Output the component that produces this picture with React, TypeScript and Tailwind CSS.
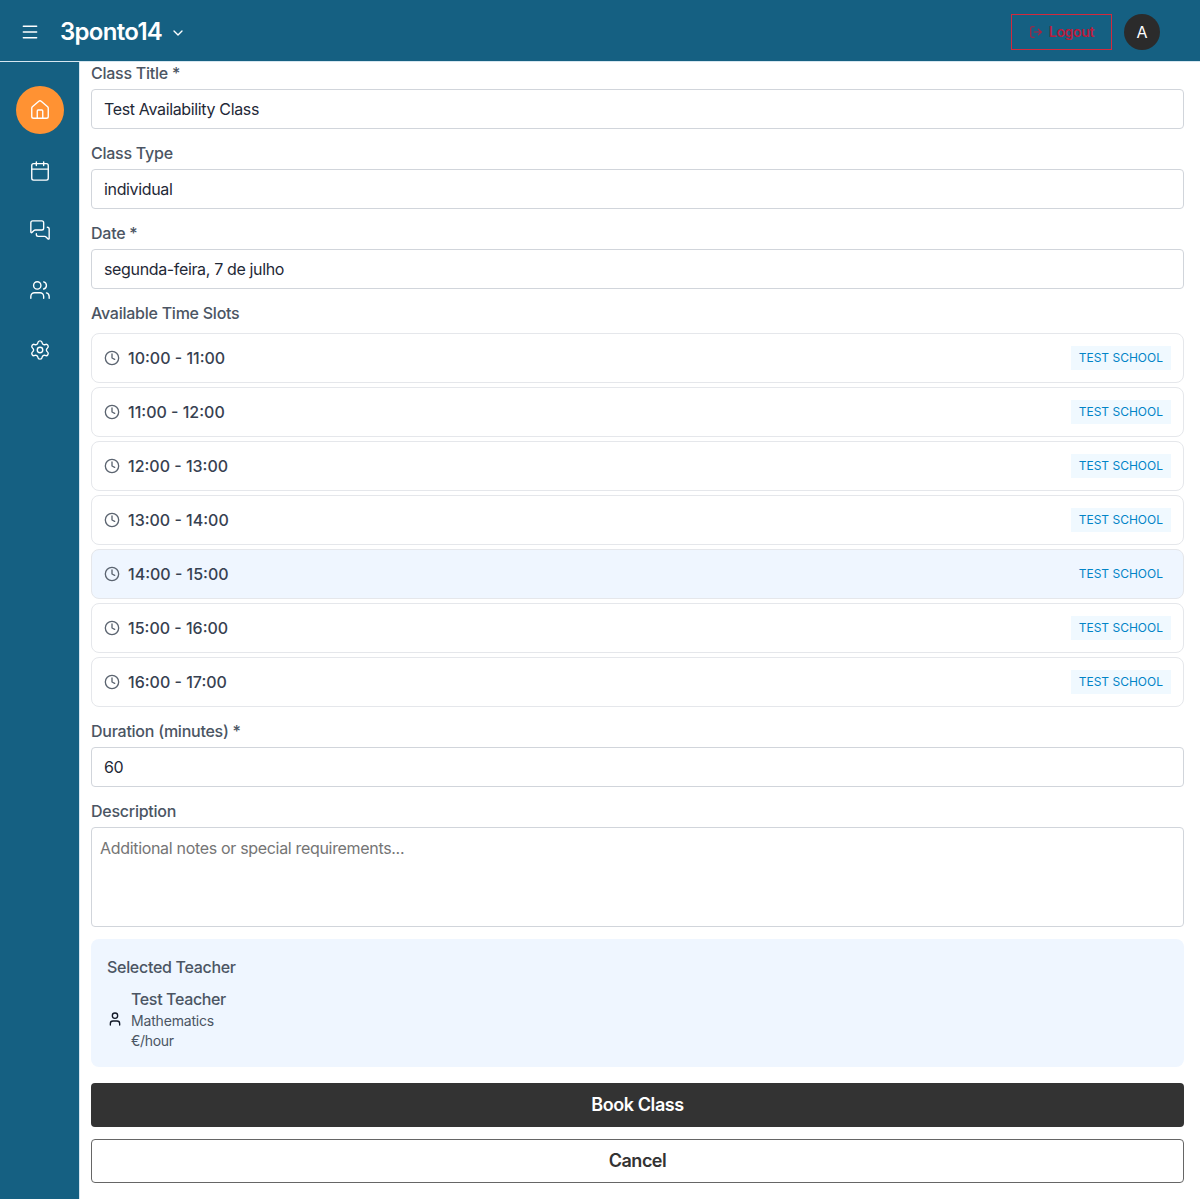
import { Calendar, ChevronDown, Clock, Home, LogOut, Menu, MessagesSquare, Settings, User, Users } from 'lucide-react';

const slots = ['10:00 - 11:00', '11:00 - 12:00', '12:00 - 13:00', '13:00 - 14:00', '14:00 - 15:00', '15:00 - 16:00', '16:00 - 17:00'];

function Label({ children }: { children: string }) {
  return <div className="h-6 mb-1 text-base leading-6 font-medium tracking-[-0.25px] text-[#4b5563]">{children}</div>;
}

function Field({ label, value }: { label: string; value: string }) {
  return (
    <div className="mb-3">
      <Label>{label}</Label>
      <div className="h-10 px-3 flex items-center bg-white border border-[#d1d5db] rounded text-base tracking-[-0.35px] text-[#1f2937]">{value}</div>
    </div>
  );
}

export default function App() {
  return (
    <div className="h-screen flex flex-col overflow-hidden bg-white font-['Inter',sans-serif]">
      {/* Header */}
      <header className="relative z-10 h-[62px] shrink-0 flex items-center bg-[#156082] border-b border-[#d6e6f0] pt-[3px] pl-[20px] pr-[40px]">
        <Menu className="w-5 h-5 text-white" strokeWidth={1.75} />
        <span className="ml-[20px] text-2xl font-semibold text-white tracking-[-0.7px]">3ponto14</span>
        <ChevronDown className="ml-[8px] w-4 h-4 text-white mt-0.5" />
        <div className="ml-auto flex items-center gap-3">
          <button className="w-[101px] h-9 flex items-center justify-center gap-[6px] border border-[#d42a3c] text-sm font-semibold tracking-[-0.3px] text-[#b91c3c]">
            <LogOut className="w-3.5 h-3.5" />
            Logout
          </button>
          <div className="w-9 h-9 rounded-full bg-[#2b2b2b] flex items-center justify-center text-base text-white">A</div>
        </div>
      </header>

      <div className="flex-1 flex min-h-0 -mt-px">
        {/* Sidebar */}
        <aside className="w-20 shrink-0 bg-[#156082] border-r border-[#d6e6f0] flex flex-col items-center pt-[25px] pl-[1px]">
          <div className="w-12 h-12 rounded-full bg-[#ff9233] flex items-center justify-center text-white">
            <Home className="w-[22px] h-[22px]" strokeWidth={1.5} />
          </div>
          <Calendar className="mt-[26px] w-[22px] h-[22px] text-white" strokeWidth={1.5} />
          <MessagesSquare className="mt-[37px] w-[22px] h-[22px] text-white" strokeWidth={1.5} />
          <Users className="mt-[38px] w-[22px] h-[22px] text-white" strokeWidth={1.5} />
          <Settings className="mt-[38px] w-[22px] h-[22px] text-white" strokeWidth={1.5} />
        </aside>

        {/* Form */}
        <main className="flex-1 pl-[11px] pr-4">
          <Field label="Class Title *" value="Test Availability Class" />
          <Field label="Class Type" value="individual" />
          <Field label="Date *" value="segunda-feira, 7 de julho" />

          <div className="h-6 mb-2 text-base leading-6 font-medium tracking-[-0.25px] text-[#4b5563]">Available Time Slots</div>
          <div className="flex flex-col gap-1 mb-3">
            {slots.map((slot, i) => (
              <div
                key={slot}
                className={`h-[50px] px-3 flex items-center justify-between border border-[#e5e7eb] rounded-lg ${i === 4 ? 'bg-[#eff6ff]' : 'bg-white'}`}
              >
                <div className="flex items-center gap-2 text-base font-medium text-[#374151]">
                  <Clock className="w-4 h-4 text-[#5b6470]" />
                  {slot}
                </div>
                <span className={`h-6 px-2 flex items-center text-xs text-[#0284c7] ${i === 4 ? '' : 'bg-[#f0f9ff]'}`}>TEST SCHOOL</span>
              </div>
            ))}
          </div>

          <Field label="Duration (minutes) *" value="60" />

          <div className="mb-3">
            <Label>Description</Label>
            <textarea
              placeholder="Additional notes or special requirements..."
              className="block w-full h-[100px] px-2 py-2 bg-white border border-[#d1d5db] rounded text-base tracking-[-0.32px] resize-none placeholder:text-[#757575]"
            />
          </div>

          <div className="mb-4 h-[128px] p-4 bg-[#eff6ff] rounded-lg">
            <div className="h-6 mb-2 text-base leading-6 font-medium tracking-[-0.3px] text-[#4b5563]">Selected Teacher</div>
            <div className="flex items-center gap-2">
              <User className="w-4 h-4 text-[#111827]" />
              <div>
                <div className="text-base leading-6 font-medium tracking-[-0.36px] text-[#4b5563]">Test Teacher</div>
                <div className="text-sm leading-5 tracking-[-0.18px] text-[#4b5563]">Mathematics</div>
                <div className="text-sm leading-5 tracking-[-0.3px] text-[#4b5563]">€/hour</div>
              </div>
            </div>
          </div>

          <button className="block w-full h-11 mb-3 rounded bg-[#333333] text-lg font-semibold tracking-[-0.4px] text-white">Book Class</button>
          <button className="block w-full h-11 rounded bg-white border border-[#666666] text-lg font-semibold tracking-[-0.5px] text-[#333333]">Cancel</button>
        </main>
      </div>
    </div>
  );
}
